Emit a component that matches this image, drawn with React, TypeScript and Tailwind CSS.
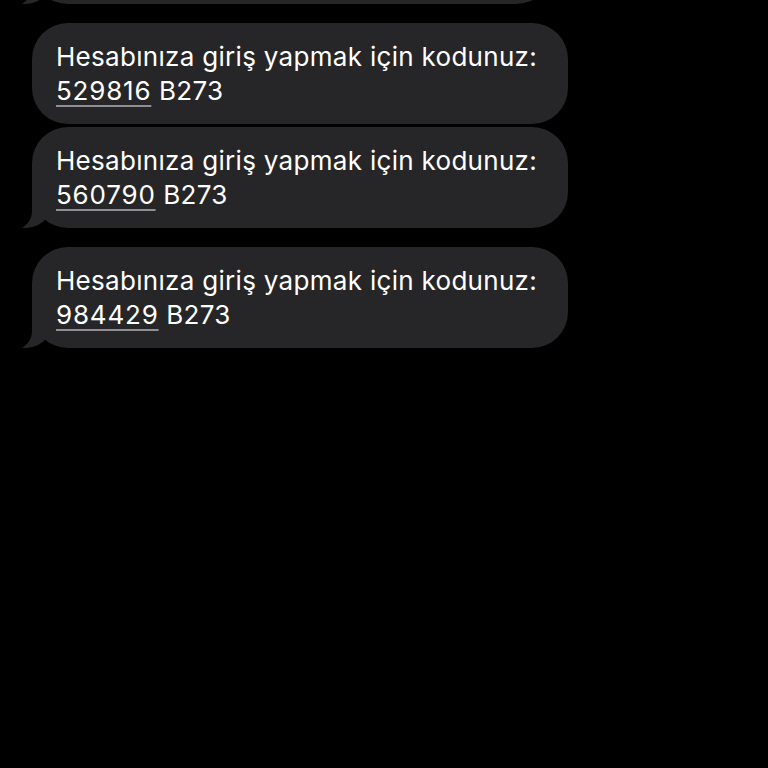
import React from 'react';

type Message = {
  code: string;
  tail: boolean;
};

const messages: Message[] = [
  { code: '529816', tail: false },
  { code: '560790', tail: true },
  { code: '984429', tail: true },
];

const Tail: React.FC = () => (
  <svg
    className="absolute bottom-[-1px] left-[-10px]"
    width="32"
    height="36"
    viewBox="0 0 32 36"
  >
    <path
      d="M10 0 L10 18 C10 26 6 31 0 35 C8 35.6 16 33 22 28 L30 10 L30 0 Z"
      fill="#262628"
    />
  </svg>
);

const Bubble: React.FC<{ msg: Message }> = ({ msg }) => (
  <div className="relative w-[536px] rounded-[36px] bg-[#262628] pb-[16px] pl-[24px] pr-[16px] pt-[17px] text-[26px] leading-[34px] tracking-[0.3px] text-white">
    <p className="whitespace-nowrap">Hesabınıza giriş yapmak için kodunuz:</p>
    <p>
      <span className="tracking-[0.8px] underline decoration-[#8e8e93] decoration-[1.5px] underline-offset-[5px]">
        {msg.code}
      </span>{' '}
      B273
    </p>
    {msg.tail && <Tail />}
  </div>
);

export default function App() {
  return (
    <div
      className="h-[768px] w-[768px] overflow-hidden bg-black"
      style={{ fontFamily: 'Inter, "Liberation Sans", sans-serif' }}
    >
      <div className="flex flex-col pl-[32px]">
        <div className="relative -mt-[96px] h-[100px] w-[520px] rounded-[36px] bg-[#262628]">
          <Tail />
        </div>
        <div className="mt-[19px] flex flex-col">
          <Bubble msg={messages[0]} />
          <div className="mt-[3px]">
            <Bubble msg={messages[1]} />
          </div>
          <div className="mt-[19px]">
            <Bubble msg={messages[2]} />
          </div>
        </div>
      </div>
    </div>
  );
}
